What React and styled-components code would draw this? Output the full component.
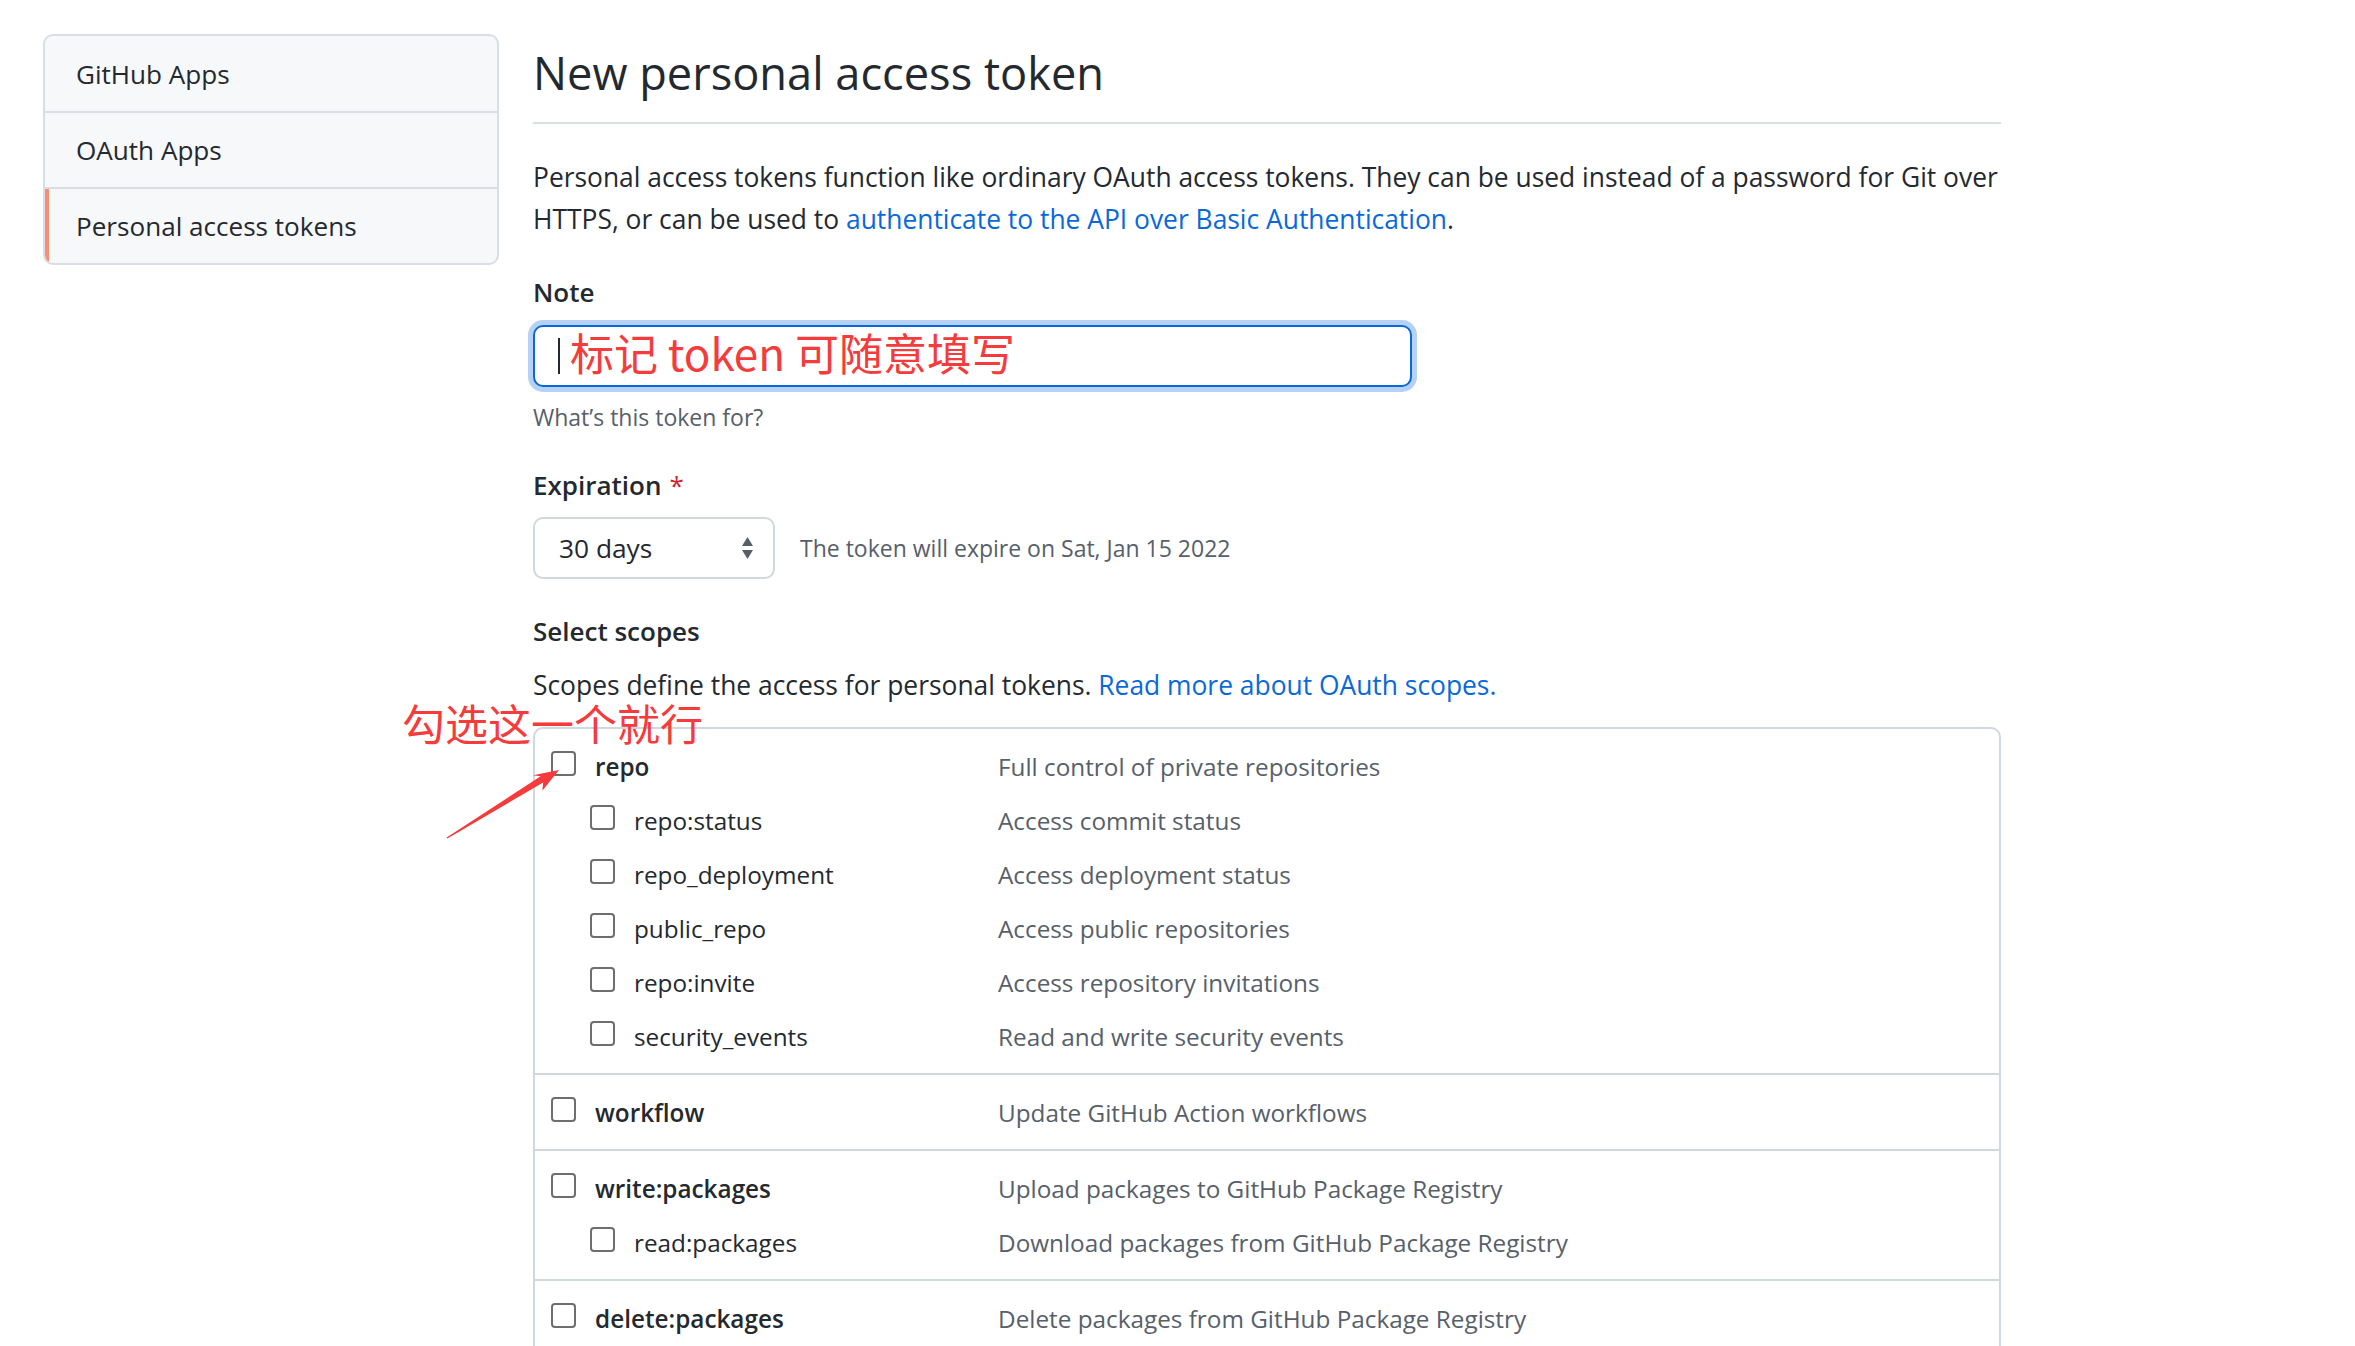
import React from "react";
import styled, { createGlobalStyle } from "styled-components";

const GlobalStyle = createGlobalStyle`
  html, body { margin: 0; padding: 0; background: #ffffff; }
  body {
    font-family: "Open Sans", "Noto Sans", "Noto Sans CJK SC", sans-serif;
    color: #24292f;
  }
  * { box-sizing: border-box; }
`;

const Page = styled.div`
  display: flex;
  align-items: flex-start;
  gap: 34px;
  padding: 34px 0 0 43px;
`;

const SideNav = styled.nav`
  width: 456px;
  flex: none;
  border: 2px solid #d8dee4;
  border-radius: 10px;
  background: #f6f8fa;
  overflow: hidden;
`;

const NavItem = styled.div`
  height: ${(p) => (p.$first ? 75 : 76)}px;
  display: flex;
  align-items: center;
  padding-left: 31px;
  font-size: 26.1px;
  color: #24292f;
  border-top: ${(p) => (p.$first ? "none" : "2px solid #d8dee4")};
  box-shadow: ${(p) => (p.$active ? "inset 4px 0 0 #fd8c73" : "none")};
`;

const Main = styled.main`
  width: 1468px;
  flex: none;
`;

const Heading = styled.h1`
  margin: 0;
  padding: 2px 0 13px;
  font-size: 45.2px;
  font-weight: 400;
  line-height: 73px;
  border-bottom: 2px solid #d8dee4;
`;

const Lead = styled.p`
  margin: ${(p) => p.$mt}px 0 0;
  font-size: 26.4px;
  line-height: 42px;
`;

const Link = styled.a`
  color: #0969da;
  text-decoration: none;
`;

const FieldLabel = styled.div`
  margin-top: ${(p) => p.$mt}px;
  font-size: 26px;
  font-weight: 600;
  line-height: 42px;
`;

const Required = styled.span`
  color: #cf222e;
  margin-left: 8px;
  font-weight: 400;
`;

const NoteBox = styled.div`
  margin-top: 12px;
  width: 879px;
  height: 62px;
  border: 2px solid #0969da;
  border-radius: 10px;
  box-shadow: 0 0 0 5px rgba(9, 105, 218, 0.3);
  display: flex;
  align-items: center;
  gap: 10px;
  padding-left: 23px;
  background: #ffffff;
`;

const Caret = styled.span`
  width: 2px;
  height: 36px;
  background: #24292f;
  flex: none;
`;

const NoteValue = styled.span`
  font-family: "Noto Sans CJK SC", sans-serif;
  font-size: 44px;
  line-height: 1;
  color: #f53b3b;
  white-space: nowrap;
  margin-bottom: 8px;
`;

const Hint = styled.div`
  margin-top: 13px;
  font-size: 23px;
  line-height: 34px;
  color: #57606a;
`;

const ExpireRow = styled.div`
  margin-top: 11px;
  display: flex;
  align-items: center;
  gap: 25px;
`;

const Select = styled.div`
  width: 242px;
  height: 62px;
  border: 2px solid #d0d7de;
  border-radius: 10px;
  background: #ffffff;
  display: flex;
  align-items: center;
  justify-content: space-between;
  padding: 0 20px 0 24px;
  font-size: 26.3px;
`;

const ExpireNote = styled.span`
  font-size: 23px;
  color: #57606a;
`;

const ScopeBox = styled.div`
  position: relative;
  margin-top: 21px;
  border: 2px solid #d0d7de;
  border-radius: 10px;
`;

const ScopeGroup = styled.div`
  padding: 10px 0;
  & + & {
    border-top: 2px solid #d0d7de;
  }
`;

const ScopeRow = styled.div`
  display: grid;
  grid-template-columns: 447px 1fr;
  align-items: center;
  height: 54px;
  padding-left: 16px;
`;

const ScopeName = styled.label`
  display: flex;
  align-items: center;
  gap: 19px;
  padding-left: ${(p) => (p.$child ? 39 : 0)}px;
  font-size: 24.3px;
  font-weight: ${(p) => (p.$child ? 400 : 600)};
  color: #24292f;
`;

const Check = styled.span`
  width: 25px;
  height: 25px;
  flex: none;
  border: 2px solid #6e6e6e;
  border-radius: 4px;
  background: #ffffff;
  margin-bottom: 6px;
`;

const ScopeDesc = styled.span`
  font-size: 24.3px;
  color: #57606a;
`;

const Callout = styled.div`
  position: absolute;
  left: -133px;
  top: -29px;
  font-family: "Noto Sans CJK SC", sans-serif;
  font-size: 43px;
  line-height: 44px;
  color: #f53b3b;
  white-space: nowrap;
  pointer-events: none;
`;

const ArrowMark = styled.svg`
  position: absolute;
  left: -100px;
  top: 30px;
  overflow: visible;
  pointer-events: none;
`;

const groups = [
  [
    ["repo", "Full control of private repositories"],
    ["repo:status", "Access commit status", true],
    ["repo_deployment", "Access deployment status", true],
    ["public_repo", "Access public repositories", true],
    ["repo:invite", "Access repository invitations", true],
    ["security_events", "Read and write security events", true],
  ],
  [["workflow", "Update GitHub Action workflows"]],
  [
    ["write:packages", "Upload packages to GitHub Package Registry"],
    ["read:packages", "Download packages from GitHub Package Registry", true],
  ],
  [["delete:packages", "Delete packages from GitHub Package Registry"]],
  [
    ["admin:org", "Full control of orgs and teams, read and write org projects"],
    ["write:org", "Read and write org and team membership, read and write org projects", true],
  ],
];

function SelectArrows() {
  return (
    <svg width="11" height="22" viewBox="0 0 11 22">
      <path d="M5.5 0 L11 9 L0 9 Z" fill="#57606a" />
      <path d="M0 13 L11 13 L5.5 22 Z" fill="#57606a" />
    </svg>
  );
}

export default function App() {
  return (
    <>
      <GlobalStyle />
      <Page>
        <SideNav>
          <NavItem $first>GitHub Apps</NavItem>
          <NavItem>OAuth Apps</NavItem>
          <NavItem $active>Personal access tokens</NavItem>
        </SideNav>
        <Main>
          <Heading>New personal access token</Heading>
          <Lead $mt={32}>
            Personal access tokens function like ordinary OAuth access tokens. They can be used instead of a password for Git over
            <br />
            HTTPS, or can be used to <Link>authenticate to the API over Basic Authentication</Link>.
          </Lead>
          <FieldLabel $mt={31}>Note</FieldLabel>
          <NoteBox>
            <Caret />
            <NoteValue>标记 token 可随意填写</NoteValue>
          </NoteBox>
          <Hint>What’s this token for?</Hint>
          <FieldLabel $mt={30}>
            Expiration<Required>*</Required>
          </FieldLabel>
          <ExpireRow>
            <Select>
              <span>30 days</span>
              <SelectArrows />
            </Select>
            <ExpireNote>The token will expire on Sat, Jan 15 2022</ExpireNote>
          </ExpireRow>
          <FieldLabel $mt={31}>Select scopes</FieldLabel>
          <Lead $mt={12}>
            Scopes define the access for personal tokens. <Link>Read more about OAuth scopes.</Link>
          </Lead>
          <ScopeBox>
            {groups.map((g, gi) => (
              <ScopeGroup key={gi}>
                {g.map(([name, desc, child]) => (
                  <ScopeRow key={name}>
                    <ScopeName $child={child}>
                      <Check />
                      {name}
                    </ScopeName>
                    <ScopeDesc>{desc}</ScopeDesc>
                  </ScopeRow>
                ))}
              </ScopeGroup>
            ))}
            <Callout>勾选这一个就行</Callout>
            <ArrowMark width="140" height="100" viewBox="0 0 140 100">
              <polygon
                points="11.6,78.4 105.6,17.3 97.9,16.3 124,11 107.3,31.7 108.2,23.5 12.4,79.6"
                fill="#f53b3b"
              />
            </ArrowMark>
          </ScopeBox>
        </Main>
      </Page>
    </>
  );
}
